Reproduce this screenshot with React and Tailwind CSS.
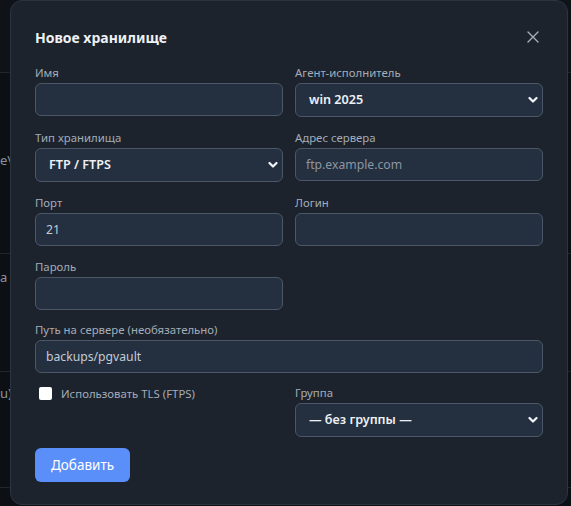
import React from 'react';

const font = { fontFamily: '"Noto Sans", "Open Sans", sans-serif' };

function Label({ children }) {
  return <label className="block text-[11.4px] leading-4 text-[#a3acb8] mb-0.5">{children}</label>;
}

function TextInput({ value, placeholder }) {
  return (
    <input
      defaultValue={value}
      placeholder={placeholder}
      className="block w-full h-[33px] rounded-md border border-[#4b5668] bg-[#243040] px-2.5 text-[12.2px] text-[#c3cbd5] placeholder:text-[#8c96a3] outline-none"
    />
  );
}

function Chevron() {
  return (
    <svg className="pointer-events-none absolute right-[5px] top-1/2 -translate-y-1/2" width="10" height="7" viewBox="0 0 10 7" fill="none">
      <path d="M1.5 1.5 L5 5 L8.5 1.5" stroke="#f1f4f8" strokeWidth="2.2" strokeLinecap="round" strokeLinejoin="round" />
    </svg>
  );
}

function Select({ value }) {
  return (
    <div className="relative">
      <select
        defaultValue={value}
        className="block w-full h-[34px] appearance-none rounded-md border border-[#4b5668] bg-[#243040] pl-[13px] pr-6 text-[12.6px] font-semibold text-[#eef1f5] outline-none"
      >
        <option>{value}</option>
      </select>
      <Chevron />
    </div>
  );
}

function Field({ label, children }) {
  return (
    <div>
      <Label>{label}</Label>
      {children}
    </div>
  );
}

export default function App() {
  return (
    <div className="relative w-[571px] h-[506px] overflow-hidden bg-[#0c1015]" style={font}>
      {/* page behind the dialog */}
      <div className="flex flex-col">
        <div className="h-[73px] border-b border-[#20262e] bg-[#0f1318]" />
        <div className="h-[181px] border-b border-[#20262e] text-[13px] text-[#8b949e] pt-[78px]">e\</div>
        <div className="h-[118px] border-b border-[#20262e] text-[13px] text-[#8b949e] pt-[14px]">a</div>
        <div className="h-[116px] border-b border-[#20262e] text-[13px] text-[#8b949e] pt-[12px]">u)</div>
      </div>

      {/* dialog */}
      <div className="absolute left-[10px] top-0 w-[558px] h-[505px] rounded-xl border border-[#2c343f] bg-[#1c232d] px-6 pt-[22px]">
        <div className="flex items-center justify-between h-7">
          <h2 className="text-[14px] font-bold text-[#eef1f5]">Новое хранилище</h2>
          <button className="mr-1 text-[#a5aeb9]">
            <svg width="12" height="12" viewBox="0 0 12 12" fill="none">
              <path d="M1 1 L11 11 M11 1 L1 11" stroke="currentColor" strokeWidth="1.4" strokeLinecap="round" />
            </svg>
          </button>
        </div>

        <div className="mt-3.5 grid grid-cols-2 gap-x-3 gap-y-[13px]">
          <Field label="Имя">
            <TextInput />
          </Field>
          <Field label="Агент-исполнитель">
            <Select value="win 2025" />
          </Field>
          <Field label="Тип хранилища">
            <Select value="FTP / FTPS" />
          </Field>
          <Field label="Адрес сервера">
            <TextInput placeholder="ftp.example.com" />
          </Field>
          <Field label="Порт">
            <TextInput value="21" />
          </Field>
          <Field label="Логин">
            <TextInput />
          </Field>
          <Field label="Пароль">
            <TextInput />
          </Field>
          <div />
          <div className="col-span-2 -mt-px">
            <Field label="Путь на сервере (необязательно)">
              <TextInput value="backups/pgvault" />
            </Field>
          </div>
          <label className="-mt-px flex items-start gap-[9px] pl-1 pt-[1px] text-[11.4px] leading-4 text-[#a3acb8]">
            <span className="mt-[1px] h-[13px] w-[13px] rounded-[2px] bg-white" />
            Использовать TLS (FTPS)
          </label>
          <div className="-mt-px">
            <Field label="Группа">
              <Select value="— без группы —" />
            </Field>
          </div>
        </div>

        <button className="mt-[11px] h-[34px] w-[95px] rounded-md bg-[#5a8ffa] text-[13.5px] text-white">
          Добавить
        </button>
      </div>
    </div>
  );
}
